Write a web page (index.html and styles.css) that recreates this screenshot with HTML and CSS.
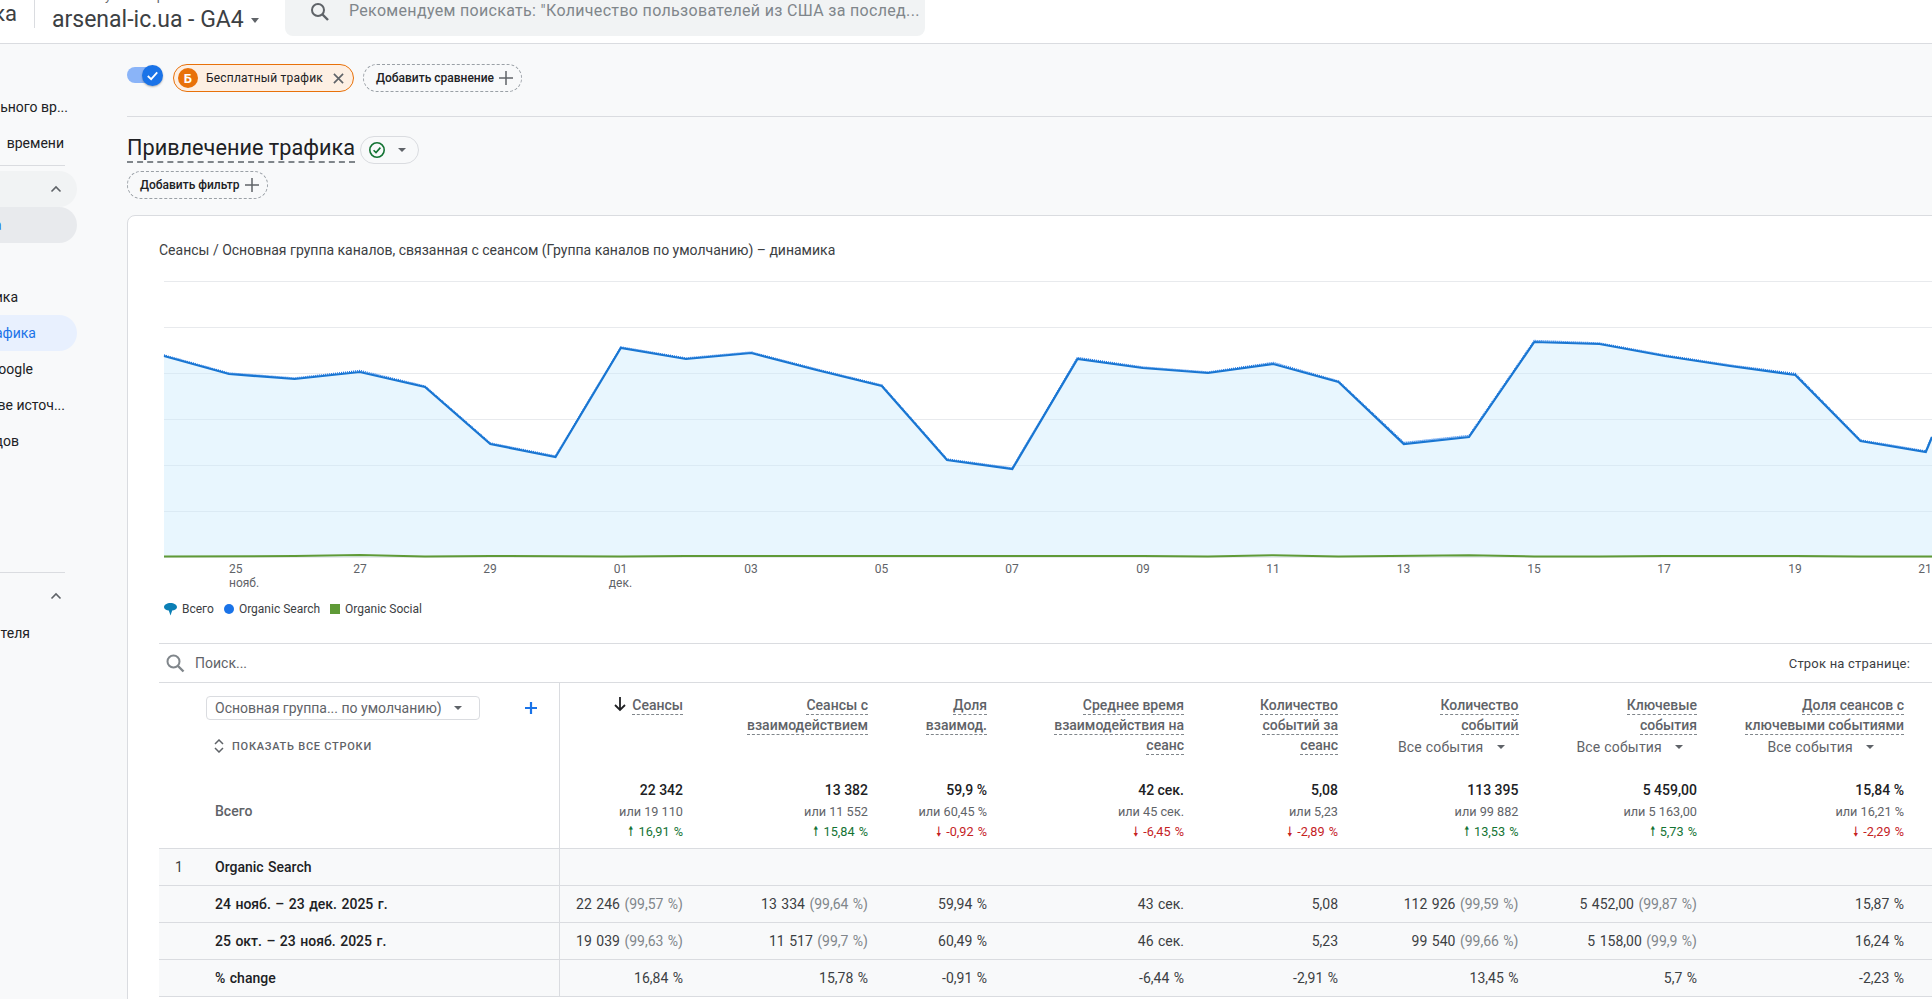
FILE: index.html
```html
<!DOCTYPE html>
<html lang="ru">
<head>
<meta charset="utf-8">
<title>Привлечение трафика</title>
<link rel="stylesheet" href="styles.css">
</head>
<body>
<header class="topbar">
  <div class="brand">ка</div>
  <div class="account">
    <div class="crumb">Все аккаунты &gt; Арсенал</div>
    <div class="property">arsenal-ic.ua - GA4<span class="caret"></span></div>
  </div>
  <div class="search">
    <svg class="search-ico" viewBox="0 0 24 24"><circle cx="10" cy="10" r="6" fill="none" stroke="#5f6368" stroke-width="2"/><path d="M14.5 14.5 20 20" stroke="#5f6368" stroke-width="2.4"/></svg>
    <span>Рекомендуем поискать: "Количество пользователей из США за послед...</span>
  </div>
</header>
<div class="shell">
  <nav class="side">
    <div class="nav-item r9">льного вр...</div>
    <div class="nav-item r13">времени</div>
    <div class="nav-rule"></div>
    <div class="nav-item nav-head"><svg class="chev" viewBox="0 0 12 8"><path d="M1.5 6.5 6 2l4.5 4.5" fill="none" stroke="#5f6368" stroke-width="1.6"/></svg></div>
    <div class="nav-item nav-sel"><span class="blue">а</span></div>
    <div class="nav-gap"></div>
    <div class="nav-item r59">ика</div>
    <div class="nav-item nav-act r41">афика</div>
    <div class="nav-item r44">oogle</div>
    <div class="nav-item r12">ве источ...</div>
    <div class="nav-item r58">дов</div>
    <div class="nav-gap2"></div>
    <div class="nav-rule"></div>
    <div class="nav-item nav-head nav-head2"><svg class="chev" viewBox="0 0 12 8"><path d="M1.5 6.5 6 2l4.5 4.5" fill="none" stroke="#5f6368" stroke-width="1.6"/></svg></div>
    <div class="nav-item r47">теля</div>
  </nav>
  <main class="main">
    <section class="compare">
      <span class="toggle"><span class="knob"><svg viewBox="0 0 20 20"><path d="M5.5 10.5 8.7 13.5 14.5 7" fill="none" stroke="#fff" stroke-width="1.7"/></svg></span></span>
      <span class="chip chip-seg"><span class="seg-badge">Б</span>Бесплатный трафик<svg class="x" viewBox="0 0 12 12"><path d="M1 1l10 10M11 1 1 11" stroke="#5f6368" stroke-width="1.8"/></svg></span>
      <span class="chip chip-dash">Добавить сравнение<svg class="plus" viewBox="0 0 14 14"><path d="M7 0v14M0 7h14" stroke="#5f6368" stroke-width="1.5"/></svg></span>
    </section>
    <section class="titlebar">
      <div class="title-row">
        <h1 class="title">Привлечение трафика</h1>
        <span class="status"><svg viewBox="0 0 18 18"><circle cx="9" cy="9" r="7.2" fill="none" stroke="#137333" stroke-width="1.6"/><path d="M5.6 9.2 8 11.6l4.4-5" fill="none" stroke="#137333" stroke-width="1.6"/></svg><span class="caret caret-sm"></span></span>
      </div>
      <span class="chip chip-dash chip-filter">Добавить фильтр<svg class="plus" viewBox="0 0 14 14"><path d="M7 0v14M0 7h14" stroke="#5f6368" stroke-width="1.5"/></svg></span>
    </section>
    <section class="card">
      <div class="chart-title">Сеансы / Основная группа каналов, связанная с сеансом (Группа каналов по умолчанию) – динамика</div>
      <div class="chart">
        <svg class="plot" width="1773" height="320" viewBox="0 0 1773 320">
          <g stroke="#e8eaed" stroke-width="1">
            <path d="M5 0.5H1773M5 46.5H1773M5 92.5H1773M5 138.5H1773M5 184.5H1773M5 230.5H1773M5 276.5H1773"/>
          </g>
          <path fill="#cdebfd" fill-opacity=".45" d="M5 75 70 93 135.6 98 200.8 91 266 106 331.3 163 396.5 176 461.8 67 527 78 592.3 72 657.5 89 722.8 105 788 179 853.3 188 918.5 78 983.8 87 1049 92 1114.3 83 1179.5 101 1244.8 163 1310 156 1375.3 61 1440.5 63 1505.8 75 1571 85 1636.3 94 1701.5 160 1766.8 171 1773 156V276H5Z"/>
          <path fill="none" stroke="#1a73e8" stroke-width="1.4" stroke-dasharray="1 1" d="M5 74 70 92 135.6 97 200.8 89.5 266 105 331.3 162 396.5 175 461.8 66 527 77 592.3 71 657.5 88 722.8 104 788 178 853.3 187 918.5 76.5 983.8 86 1049 91 1114.3 81.5 1179.5 100 1244.8 161.5 1310 154.5 1375.3 59.5 1440.5 62 1505.8 74 1571 84 1636.3 92.5 1701.5 159 1766.8 170 1773 155"/>
          <path fill="none" stroke="#1976d2" stroke-width="2.2" d="M5 75 70 93 135.6 98 200.8 91 266 106 331.3 163 396.5 176 461.8 67 527 78 592.3 72 657.5 89 722.8 105 788 179 853.3 188 918.5 78 983.8 87 1049 92 1114.3 83 1179.5 101 1244.8 163 1310 156 1375.3 61 1440.5 63 1505.8 75 1571 85 1636.3 94 1701.5 160 1766.8 171 1773 156"/>
          <path fill="none" stroke="#5f9a37" stroke-width="2" d="M5 275.5 135.6 275 200.8 274 266 275.5 331.3 275 461.8 275.5 527 275 722.8 275 788 275 983.8 275 1049 275.5 1114.3 274.3 1179.5 275.5 1310 274.3 1375.3 275.5 1440.5 275.5 1505.8 275 1636.3 275 1701.5 275.5 1773 275.5"/>
        </svg>
        <div class="axis">
          <span class="tick tick-first t25">25<br>нояб.</span>
          <span class="tick t27">27</span>
          <span class="tick t29">29</span>
          <span class="tick t01">01<br>дек.</span>
          <span class="tick t03">03</span>
          <span class="tick t05">05</span>
          <span class="tick t07">07</span>
          <span class="tick t09">09</span>
          <span class="tick t11">11</span>
          <span class="tick t13">13</span>
          <span class="tick t15">15</span>
          <span class="tick t17">17</span>
          <span class="tick t19">19</span>
          <span class="tick t21">21</span>
        </div>
      </div>
      <div class="legend">
        <span class="lg"><svg class="lg-pin" viewBox="0 0 13 13"><path d="M6.5 0C3 0 0 1.7 0 4.2 0 6 2.6 7.2 4.8 7.5L6.5 12.5 8.2 7.5C10.4 7.2 13 6 13 4.2 13 1.7 10 0 6.5 0Z" fill="#0b7fb5"/></svg>Всего</span>
        <span class="lg"><i class="lg-dot"></i>Organic Search</span>
        <span class="lg"><i class="lg-sq"></i>Organic Social</span>
      </div>
      <div class="table">
        <div class="tools">
          <svg class="tools-ico" viewBox="0 0 20 20"><circle cx="8.5" cy="8.5" r="6" fill="none" stroke="#80868b" stroke-width="2"/><path d="M13 13l5.5 5.5" stroke="#80868b" stroke-width="2.4"/></svg>
          <span class="tools-search">Поиск...</span>
          <span class="tools-rows">Строк на странице:</span>
        </div>
        <div class="grid">
          <div class="hd-left">
            <div class="dim-row">
              <span class="dim">Основная группа... по умолчанию)<span class="caret caret-sm"></span></span>
              <svg class="dim-plus" viewBox="0 0 14 14"><path d="M7 1v12M1 7h12" stroke="#1a73e8" stroke-width="2.2"/></svg>
            </div>
            <div class="showall"><svg viewBox="0 0 10 14"><path d="M1 5 5 1l4 4M1 9l4 4 4-4" fill="none" stroke="#5f6368" stroke-width="1.5"/></svg>ПОКАЗАТЬ ВСЕ СТРОКИ</div>
            <div class="total-label">Всего</div>
          </div>

          <div class="hd"><div class="hd-name"><svg class="sort" viewBox="0 0 14 16"><path d="M7 1v13M2 9l5 5 5-5" fill="none" stroke="#202124" stroke-width="1.8"/></svg><span class="dash">Сеансы</span></div><div class="tot"><b>22 342</b><span>или 19 110</span><em class="up">🠕 16,91 %</em></div></div>
          <div class="hd"><div class="hd-name"><span class="dash">Сеансы с</span><br><span class="dash">взаимодействием</span></div><div class="tot"><b>13 382</b><span>или 11 552</span><em class="up">🠕 15,84 %</em></div></div>
          <div class="hd"><div class="hd-name"><span class="dash">Доля</span><br><span class="dash">взаимод.</span></div><div class="tot"><b>59,9 %</b><span>или 60,45 %</span><em class="dn">🠗 -0,92 %</em></div></div>
          <div class="hd"><div class="hd-name"><span class="dash">Среднее время</span><br><span class="dash">взаимодействия на</span><br><span class="dash">сеанс</span></div><div class="tot"><b>42 сек.</b><span>или 45 сек.</span><em class="dn">🠗 -6,45 %</em></div></div>
          <div class="hd"><div class="hd-name"><span class="dash">Количество</span><br><span class="dash">событий за</span><br><span class="dash">сеанс</span></div><div class="tot"><b>5,08</b><span>или 5,23</span><em class="dn">🠗 -2,89 %</em></div></div>
          <div class="hd"><div class="hd-name"><span class="dash">Количество</span><br><span class="dash">событий</span><div class="ev">Все события<span class="caret caret-sm"></span></div></div><div class="tot"><b>113 395</b><span>или 99 882</span><em class="up">🠕 13,53 %</em></div></div>
          <div class="hd"><div class="hd-name"><span class="dash">Ключевые</span><br><span class="dash">события</span><div class="ev">Все события<span class="caret caret-sm"></span></div></div><div class="tot"><b>5 459,00</b><span>или 5 163,00</span><em class="up">🠕 5,73 %</em></div></div>
          <div class="hd"><div class="hd-name"><span class="dash">Доля сеансов с</span><br><span class="dash">ключевыми событиями</span><div class="ev">Все события<span class="caret caret-sm"></span></div></div><div class="tot"><b>15,84 %</b><span>или 16,21 %</span><em class="dn">🠗 -2,29 %</em></div></div>

          <div class="c lab"><span class="rank">1</span><b>Organic Search</b></div>
          <div class="c"></div><div class="c nb"></div><div class="c nb"></div><div class="c nb"></div><div class="c nb"></div><div class="c nb"></div><div class="c nb"></div><div class="c nb"></div>

          <div class="c lab"><span class="rank"></span><b>24 нояб. – 23 дек. 2025 г.</b></div>
          <div class="c">22 246 <i>(99,57 %)</i></div><div class="c nb">13 334 <i>(99,64 %)</i></div><div class="c nb">59,94 %</div><div class="c nb">43 сек.</div><div class="c nb">5,08</div><div class="c nb">112 926 <i>(99,59 %)</i></div><div class="c nb">5 452,00 <i>(99,87 %)</i></div><div class="c nb">15,87 %</div>

          <div class="c lab"><span class="rank"></span><b>25 окт. – 23 нояб. 2025 г.</b></div>
          <div class="c">19 039 <i>(99,63 %)</i></div><div class="c nb">11 517 <i>(99,7 %)</i></div><div class="c nb">60,49 %</div><div class="c nb">46 сек.</div><div class="c nb">5,23</div><div class="c nb">99 540 <i>(99,66 %)</i></div><div class="c nb">5 158,00 <i>(99,9 %)</i></div><div class="c nb">16,24 %</div>

          <div class="c lab"><span class="rank"></span><b>% change</b></div>
          <div class="c">16,84 %</div><div class="c nb">15,78 %</div><div class="c nb">-0,91 %</div><div class="c nb">-6,44 %</div><div class="c nb">-2,91 %</div><div class="c nb">13,45 %</div><div class="c nb">5,7 %</div><div class="c nb">-2,23 %</div>
        </div>
      </div>
    </section>
  </main>
</div>
</body>
</html>
```
FILE: styles.css
```css
* { box-sizing: border-box; }
html, body { margin: 0; height: 999px; overflow: hidden; }
body { background: #f8f9fa; font-family: Roboto, "Noto Sans", sans-serif; color: #202124; width: 1932px; }
.topbar { height: 44px; background: #fff; border-bottom: 1px solid #dadce0; display: flex; align-items: flex-start; position: relative; }
.brand { width: 35px; padding-right: 17px; font-size: 22px; line-height: 26px; color: #3c4043; display: flex; justify-content: flex-end; border-right: 1px solid #dadce0; height: 28px; padding-top: 1px; }
.account { margin-left: 17px; width: 233px; margin-top: -11px; }
.crumb { font-size: 13px; line-height: 14px; color: #5f6368; white-space: nowrap; }
.property { font-size: 23px; line-height: 26px; color: #3c4043; white-space: nowrap; margin-top: 4px; }
.caret { display: inline-block; width: 0; height: 0; border: 4px solid transparent; border-top: 5px solid #5f6368; border-bottom: 0; margin-left: 7px; vertical-align: middle; }
.caret-sm { border-width: 4px 4px 0; border-top-color: #5f6368; margin-left: 0; }
.search { width: 640px; height: 36px; background: #f1f3f4; border-radius: 0 0 8px 8px; display: flex; align-items: flex-start; padding-left: 23px; font-size: 16px; color: #80868b; white-space: nowrap; }
.search span { margin-top: 1px; line-height: 20px; letter-spacing: .32px; }
.search-ico { width: 24px; height: 24px; margin-right: 17px; flex: none; }
.shell { display: flex; height: 955px; }
.side { width: 127px; flex: none; font-size: 14px; color: #202124; padding-top: 45px; white-space: nowrap; overflow: hidden; }
.nav-item { height: 36px; width: 77px; border-radius: 0 18px 18px 0; display: flex; justify-content: flex-end; align-items: center; }
.r9 { padding-right: 9px; }
.r12 { padding-right: 12px; }
.r13 { padding-right: 13px; }
.r41 { padding-right: 41px; }
.r44 { padding-right: 44px; }
.r47 { padding-right: 47px; }
.r58 { padding-right: 58px; }
.r59 { padding-right: 59px; }
.nav-rule { width: 65px; height: 1px; background: #dadce0; margin: 4px 0 5px; }
.nav-head { background: #f1f3f4; padding-right: 15px; }
.nav-head2 { background: transparent; margin-top: 1px; margin-bottom: 1px; }
.nav-sel { background: #e8eaed; justify-content: flex-start; }
.blue { color: #1a73e8; margin-left: -6px; }
.nav-gap { height: 36px; }
.nav-act { background: #e8f0fe; color: #1a73e8; }
.nav-gap2 { height: 109px; }
.chev { width: 12px; height: 8px; }
.main { flex: 1; min-width: 0; }
.compare { height: 73px; display: flex; align-items: flex-start; padding-top: 20px; border-bottom: 1px solid #dadce0; }
.toggle { width: 36px; height: 22px; margin-top: 1px; position: relative; margin-right: 10px; }
.toggle::before { content: ""; position: absolute; left: 0; top: 2px; width: 30px; height: 16px; border-radius: 8px; background: #8ab4f8; }
.knob { position: absolute; right: 0; top: 0; width: 21px; height: 21px; border-radius: 50%; background: #1a73e8; box-shadow: 0 1px 2px rgba(60,64,67,.4); }
.knob svg { width: 21px; height: 21px; display: block; }
.chip { display: inline-flex; align-items: center; height: 28px; border-radius: 14px; font-size: 12px; font-weight: 500; color: #202124; white-space: nowrap; }
.chip-seg { width: 181px; background: #fdefe3; border: 1px solid #e8710a; padding-left: 4px; font-weight: 400; letter-spacing: .2px; }
.seg-badge { width: 20px; height: 20px; border-radius: 50%; background: #e8710a; color: #fff; font-size: 13px; font-weight: 700; display: flex; align-items: center; justify-content: center; margin-right: 8px; }
.x { width: 11px; height: 11px; margin-left: auto; margin-right: 9px; }
.chip-dash { border: 1px dashed #9aa0a6; padding: 0 8px 0 12px; margin-left: 9px; width: 159px; justify-content: space-between; }
.plus { width: 14px; height: 14px; }
.titlebar { height: 98px; display: flex; flex-direction: column; align-items: flex-start; padding-top: 17px; }
.title-row { display: flex; align-items: flex-start; height: 37px; }
.title { margin: 0; font-size: 21.7px; font-weight: 400; line-height: 27px; border-bottom: 2px dashed #80868b; color: #202124; height: 29px; }
.status { width: 59px; height: 28px; border: 1px solid #dadce0; border-radius: 14px; margin: 2px 0 0 5px; display: flex; align-items: center; padding-left: 7px; gap: 12px; }
.status svg { width: 18px; height: 18px; }
.chip-filter { margin-left: 0; width: 141px; }
.card { width: 1806px; height: 790px; background: #fff; border: 1px solid #dadce0; border-radius: 8px 0 0 0; padding-left: 31px; overflow: hidden; }
.chart-title { font-size: 14px; line-height: 18px; margin-top: 25px; color: #3c4043; white-space: nowrap; }
.chart { position: relative; height: 318px; margin-top: 22px; }
.plot { display: block; }
.axis { position: absolute; left: 0; right: 0; top: 281px; height: 30px; }
.tick { position: absolute; font-size: 12px; line-height: 14px; color: #5f6368; text-align: center; transform: translateX(-50%); }
.tick-first { transform: none; text-align: left; }
.t25 { left: 70px; }
.t27 { left: 201px; }
.t29 { left: 331px; }
.t01 { left: 461.5px; }
.t03 { left: 592px; }
.t05 { left: 722.5px; }
.t07 { left: 853px; }
.t09 { left: 984px; }
.t11 { left: 1114px; }
.t13 { left: 1244.5px; }
.t15 { left: 1375px; }
.t17 { left: 1505px; }
.t19 { left: 1636px; }
.t21 { left: 1766px; }
.legend { display: flex; gap: 10px; font-size: 12px; color: #3c4043; height: 18px; margin-top: 1px; padding-left: 5px; }
.lg { display: inline-flex; align-items: center; }
.lg-pin { width: 13px; height: 13px; margin-right: 5px; }
.lg-dot { width: 10px; height: 10px; border-radius: 50%; background: #1a73e8; margin-right: 5px; }
.lg-sq { width: 10px; height: 10px; background: #5f9a37; margin-right: 5px; }
.table { margin-top: 25px; }
.tools { height: 40px; border-top: 1px solid #dadce0; border-bottom: 1px solid #dadce0; display: flex; align-items: center; padding-left: 6px; padding-right: 22px; font-size: 13px; }
.tools-ico { width: 20px; height: 20px; margin-right: 10px; }
.tools-search { font-size: 14px; color: #5f6368; }
.tools-rows { margin-left: auto; color: #3c4043; letter-spacing: .2px; }
.grid { display: grid; grid-template-columns: 400px 140px 185px 119px 197px 154px 180.5px 178.5px 220px; grid-template-rows: 166px 37px 37px 37px 37px; font-size: 13px; }
.grid > :nth-child(9n) { padding-right: 29px; }
.grid > :nth-child(9n) .tot { right: 29px; }
.grid > :nth-child(9) .ev { padding-right: 30px; }
.hd-left { border-bottom: 1px solid #dadce0; padding: 13px 0 0 47px; position: relative; }
.dim-row { display: flex; align-items: center; height: 24px; }
.dim { width: 274px; height: 24px; border: 1px solid #dadce0; border-radius: 4px; background: #fff; font-size: 14px; color: #5f6368; padding-left: 8px; display: flex; align-items: center; gap: 12px; }
.dim-plus { width: 14px; height: 14px; margin-left: 44px; }
.showall { display: flex; align-items: center; font-size: 11px; font-weight: 500; letter-spacing: .75px; color: #5f6368; margin-top: 15px; padding-left: 8px; height: 22px; gap: 8px; }
.showall svg { width: 10px; height: 14px; }
.total-label { position: absolute; left: 56px; top: 118px; font-size: 14px; font-weight: 500; color: #5f6368; line-height: 20px; }
.hd { border-bottom: 1px solid #dadce0; padding: 12px 16px 0 0; text-align: right; position: relative; }
.hd:nth-child(2) { border-left: 1px solid #dadce0; }
.hd-name { font-size: 14px; font-weight: 500; color: #5f6368; line-height: 20px; white-space: nowrap; }
.dash { border-bottom: 1px dashed #80868b; padding-bottom: 1px; }
.sort { width: 14px; height: 16px; margin-right: 5px; vertical-align: -2px; }
.ev { font-weight: 400; color: #5f6368; line-height: 20px; letter-spacing: .2px; display: flex; justify-content: flex-end; align-items: center; gap: 13px; padding-right: 14px; margin-top: 2px; }
.tot { position: absolute; right: 16px; top: 97px; display: flex; flex-direction: column; align-items: flex-end; }
.tot b { font-size: 14px; font-weight: 500; line-height: 20px; color: #202124; white-space: nowrap; }
.tot span { font-size: 12.7px; color: #5f6368; line-height: 20px; margin-top: 2px; white-space: nowrap; }
.tot em { font-style: normal; font-size: 12.7px; line-height: 20px; white-space: nowrap; word-spacing: 1px; }
.up { color: #137333; }
.dn { color: #c5221f; }
.c { background: #f8f9fa; border-bottom: 1px solid #dadce0; display: flex; align-items: center; justify-content: flex-end; padding-right: 16px; font-size: 14px; color: #3c4043; white-space: pre; border-left: 1px solid #dadce0; word-spacing: 1px; }
.c.nb { border-left: 0; }
.c i { font-style: normal; color: #80868b; }
.lab { justify-content: flex-start; border-left: 0; padding-left: 16px; }
.lab b { font-weight: 500; font-size: 14px; color: #202124; }
.rank { width: 40px; flex: none; }
```
